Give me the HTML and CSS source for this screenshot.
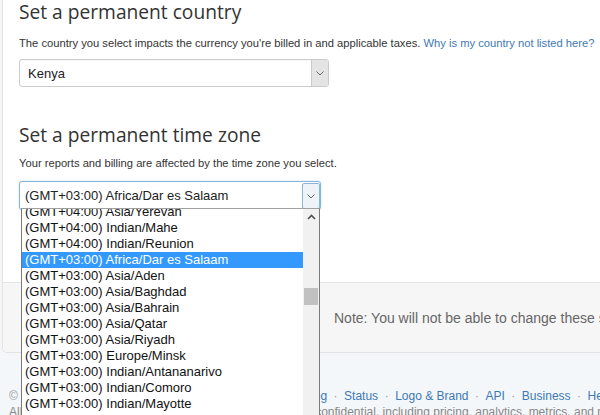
FILE: index.html
```html
<!DOCTYPE html>
<html lang="en">
  <head>
    <meta charset="utf-8">
    <meta name="viewport" content="width=device-width, initial-scale=1.0">
    <title>Settings</title>
    <link rel="stylesheet" href="styles.css">
  </head>
  <body>
    <div class="panel">
      <div class="settings">
        <h2 class="settings-title">Set a permanent country</h2>
        <p class="settings-desc">The country you select impacts the currency you're billed in and applicable taxes. <a href="#">Why is my country not listed here?</a></p>
        <div class="select select-country">
          <span class="select-value">Kenya</span>
          <span class="select-arrow">
            <svg width="8" height="5" viewBox="0 0 8 5"><polyline points="0.5,0.5 4,4 7.5,0.5" fill="none" stroke="#666" stroke-width="1"/></svg>
          </span>
        </div>

        <h2 class="settings-title title-zone">Set a permanent time zone</h2>
        <p class="settings-desc desc-zone">Your reports and billing are affected by the time zone you select.</p>
        <div class="select select-zone focused">
          <span class="select-value">(GMT+03:00) Africa/Dar es Salaam</span>
          <span class="select-arrow">
            <svg width="8" height="5" viewBox="0 0 8 5"><polyline points="0.5,0.5 4,4 7.5,0.5" fill="none" stroke="#666" stroke-width="1"/></svg>
          </span>
        </div>
      </div>
      <div class="note">Note: You will not be able to change these settings later.</div>
    </div>

    <footer class="footer">
      <div class="footer-links">
        <span>© 2019 Acme Group</span><span class="sep">·</span><a href="#">Terms</a><span class="sep">·</span><a href="#">Privacy</a><span class="sep">·</span><a href="#">Affiliates</a><span class="sep">·</span><a href="#">Blog</a><span class="sep">·</span><a href="#">Status</a><span class="sep">·</span><a href="#">Logo &amp; Brand</a><span class="sep">·</span><a href="#">API</a><span class="sep">·</span><a href="#">Business</a><span class="sep">·</span><a href="#">Help</a>
      </div>
      <div class="footer-legal">All sales, payouts and customer data on this page is kept confidential, including pricing, analytics, metrics, and more.</div>
    </footer>

    <!-- open list of the time zone select -->
    <div class="dropdown">
      <ul class="dropdown-list">
        <li>(GMT+04:00) Asia/Yerevan</li>
        <li>(GMT+04:00) Indian/Mahe</li>
        <li>(GMT+04:00) Indian/Reunion</li>
        <li class="selected">(GMT+03:00) Africa/Dar es Salaam</li>
        <li>(GMT+03:00) Asia/Aden</li>
        <li>(GMT+03:00) Asia/Baghdad</li>
        <li>(GMT+03:00) Asia/Bahrain</li>
        <li>(GMT+03:00) Asia/Qatar</li>
        <li>(GMT+03:00) Asia/Riyadh</li>
        <li>(GMT+03:00) Europe/Minsk</li>
        <li>(GMT+03:00) Indian/Antananarivo</li>
        <li>(GMT+03:00) Indian/Comoro</li>
        <li>(GMT+03:00) Indian/Mayotte</li>
        <li>(GMT+03:00) Europe/Moscow</li>
      </ul>
      <div class="scrollbar">
        <span class="scroll-up">
          <svg width="9" height="6" viewBox="0 0 9 6"><polyline points="1,5 4.5,1.5 8,5" fill="none" stroke="#505050" stroke-width="1.6"/></svg>
        </span>
        <span class="scroll-thumb"></span>
      </div>
    </div>
  </body>
</html>
```

FILE: styles.css
```css
body {
  margin: 0;
  height: 415px;
  overflow: hidden;
  position: relative;
  background: #f4f7fa;
  font-family: "Liberation Sans", Arial, sans-serif;
  color: #333;
}
a {
  color: #3d79b3;
  text-decoration: none;
}
.panel {
  margin-left: 2px;
  background: #fff;
  border-left: 1px solid #e3e3e3;
  border-bottom: 1px solid #e3e3e3;
  border-bottom-left-radius: 5px;
  overflow: hidden;
}
.settings {
  padding-left: 16px;
  height: 282px;
}
.settings-title {
  margin: 0;
  font-family: "Open Sans", sans-serif;
  font-weight: 400;
  font-size: 19.2px;
  line-height: 23px;
  color: #333;
  white-space: nowrap;
}
.title-zone {
  margin-top: 36px;
}
.settings-desc {
  margin: 12px 0 8px;
  font-size: 11.2px;
  line-height: 16px;
  white-space: nowrap;
}
.desc-zone {
  margin: 9px 0 10px;
}
.select {
  display: flex;
  align-items: center;
  box-sizing: border-box;
  border: 1px solid #ccc;
  border-radius: 3px;
  background: #fff;
  font-size: 13px;
  color: #222;
}
.select-country {
  width: 310px;
  height: 28px;
  box-shadow: inset 0 1px 1px rgba(0,0,0,0.04);
}
.select-country .select-value {
  padding-left: 8px;
}
.select-value {
  flex: 1;
  white-space: nowrap;
}
.select-arrow {
  display: flex;
  align-items: center;
  justify-content: center;
  width: 16px;
  align-self: stretch;
  background: #e4e4e4;
  border-left: 1px solid #cbcbcb;
  border-radius: 0 2px 2px 0;
}
.select-zone {
  width: 302px;
  height: 29px;
  border-color: #86b5dc;
  box-shadow: 0 0 2px rgba(102,175,233,0.45);
}
.select-zone .select-value {
  padding: 1px 0 0 5px;
  line-height: 16px;
}
.select-zone .select-arrow {
  background: #eef3f8;
  border: 1px solid #8ab6dc;
  margin: 1px 0 0;
  border-radius: 2px;
}
.note {
  height: 70px;
  box-sizing: border-box;
  display: flex;
  align-items: center;
  padding: 1px 0 0 331px;
  background: #f7f6f6;
  border-top: 1px solid #e6e6e6;
  font-size: 14px;
  color: #666;
  white-space: nowrap;
}
.footer {
  padding: 35px 0 0 9px;
  font-size: 12px;
  line-height: 16px;
  color: #888;
  white-space: nowrap;
}
.footer-links span:first-child {
  color: #999;
}
.sep {
  padding: 0 6.5px;
  color: #999;
}
.dropdown {
  position: absolute;
  left: 21px;
  top: 208px;
  width: 299px;
  height: 220px;
  box-sizing: border-box;
  display: flex;
  background: #fff;
  border: 1px solid #7a7a7a;
  border-top-color: #a0a0a0;
  overflow: hidden;
}
.dropdown-list {
  flex: 1;
  margin: -5px 0 0;
  padding: 0;
  list-style: none;
  font-size: 13px;
  color: #111;
}
.dropdown-list li {
  height: 16px;
  line-height: 16px;
  padding-left: 3px;
  white-space: nowrap;
}
.dropdown-list li.selected {
  background: #3399ff;
  color: #fff;
}
.scrollbar {
  width: 16px;
  background: #f1f1f1;
  display: flex;
  flex-direction: column;
  align-items: center;
}
.scroll-up {
  height: 16px;
  display: flex;
  align-items: center;
  justify-content: center;
}
.scroll-thumb {
  margin-top: 63px;
  width: 14px;
  height: 17px;
  background: #c1c1c1;
}
```
